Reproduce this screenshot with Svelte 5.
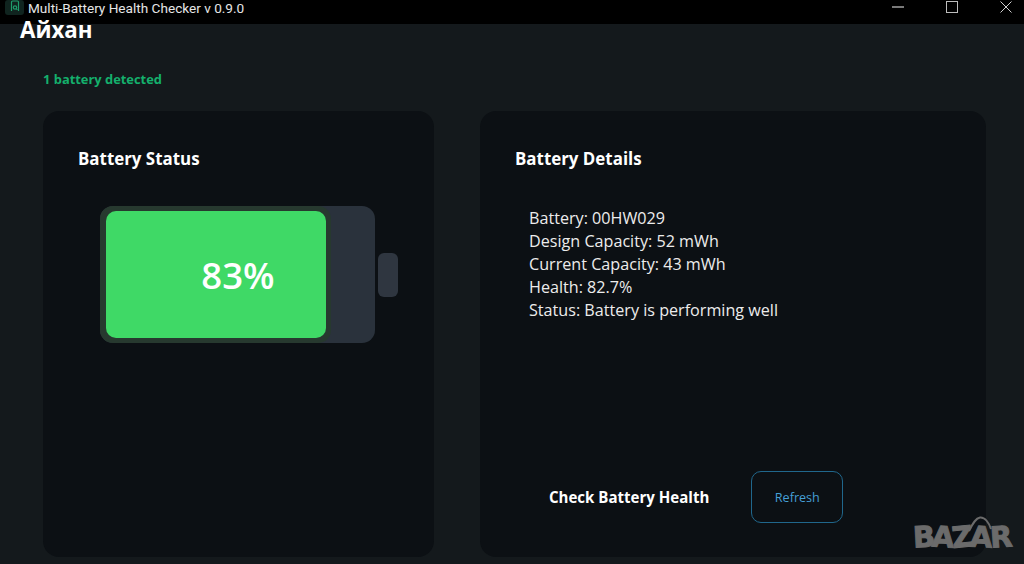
<script lang="ts">
  const battery = { name: '00HW029', design: 52, current: 43, health: 82.7, percent: 83 };
  const details = [
    `Battery: ${battery.name}`,
    `Design Capacity: ${battery.design} mWh`,
    `Current Capacity: ${battery.current} mWh`,
    `Health: ${battery.health}%`,
    'Status: Battery is performing well',
  ];
  const mark = [
    { c: 'B', r: -3 },
    { c: 'A', r: 4 },
    { c: 'Z', r: -6 },
    { c: 'A', r: 3 },
    { c: 'R', r: -4 },
  ];
</script>

<div class="window">
  <header class="titlebar">
    <div class="app-title">
      <span class="app-icon">
        <svg width="18" height="18" viewBox="0 0 18 18" fill="none" stroke="#1f9d6c" stroke-width="1.2">
          <path d="M7 1.5h4M5.5 13V4a1 1 0 0 1 1-1h5a1 1 0 0 1 1 1v9" />
          <circle cx="9" cy="9.5" r="1.7" />
          <path d="M10.2 10.7l1.2 1.2" />
        </svg>
      </span>
      <span class="app-name">Multi-Battery Health Checker v 0.9.0</span>
    </div>
    <div class="controls">
      <button class="ctl" aria-label="Minimize">
        <svg width="12" height="12" viewBox="0 0 12 12"><path d="M0 6h12" stroke="#f2f2f2" /></svg>
      </button>
      <button class="ctl" aria-label="Maximize">
        <svg width="12" height="12" viewBox="0 0 12 12"><rect x=".5" y=".5" width="11" height="11" fill="none" stroke="#bdbdbd" /></svg>
      </button>
      <button class="ctl" aria-label="Close">
        <svg width="12" height="12" viewBox="0 0 12 12"><path d="M.5.5l11 11M11.5.5l-11 11" stroke="#d0d0d0" /></svg>
      </button>
    </div>
  </header>

  <main>
    <h1>Айхан</h1>
    <p class="detected">1 battery detected</p>

    <div class="cards">
      <section class="card status">
        <h2>Battery Status</h2>
        <div class="battery">
          <div class="shell">
            <div class="glow">
              <div class="fill"><span>{battery.percent}%</span></div>
            </div>
          </div>
          <div class="cap"></div>
        </div>
      </section>

      <section class="card details">
        <h2>Battery Details</h2>
        <div class="lines">
          {#each details as line}
            <div>{line}</div>
          {/each}
        </div>
        <div class="actions">
          <span class="check">Check Battery Health</span>
          <button class="refresh">Refresh</button>
        </div>
      </section>
    </div>
  </main>

  <div class="watermark">
    <svg class="handle" width="26" height="16" viewBox="0 0 26 16" fill="none" stroke="#6b6b6b" stroke-width="2">
      <path d="M2 15C6 7 9 2 13 1.500C18 1 22 7 24 13" />
    </svg>
    {#each mark as m}
      <span style="transform: rotate({m.r}deg)">{m.c}</span>
    {/each}
  </div>
</div>

<style>
  :global(body) { margin: 0; background: #14191c; }

  .window {
    position: relative;
    width: 1024px;
    height: 564px;
    overflow: hidden;
    background: #14191c;
    color: #fff;
    font-family: "Open Sans", "Noto Sans", sans-serif;
  }

  .titlebar {
    height: 24px;
    background: #000;
    display: flex;
    justify-content: space-between;
  }

  .app-title {
    display: flex;
    align-items: flex-start;
    gap: 4px;
    padding-left: 5px;
    font-family: Roboto, "Open Sans", sans-serif;
    font-size: 13.6px;
    line-height: 16px;
    color: #e6e6e6;
  }

  .app-icon {
    width: 19px;
    height: 15px;
    background: #10241f;
    border-radius: 3px;
    overflow: hidden;
    display: flex;
    justify-content: center;
  }

  .app-icon svg { margin-top: -2px; }

  .controls {
    display: flex;
    gap: 24px;
    padding-right: 3.5px;
  }

  .ctl {
    width: 30px;
    height: 13px;
    padding: 0;
    border: none;
    background: none;
    display: flex;
    justify-content: center;
    align-items: center;
  }

  main { padding: 0 38px 0 43px; }

  h1 {
    margin: -8px 0 0 -23px;
    font-size: 22.3px;
    line-height: 28px;
    font-weight: 700;
  }

  .detected {
    margin: 27px 0 0;
    font-size: 12.9px;
    line-height: 17px;
    font-weight: 700;
    color: #14b06c;
  }

  .cards {
    display: grid;
    grid-template-columns: 391px 506px;
    gap: 46px;
    margin-top: 23px;
  }

  .card {
    height: 446px;
    box-sizing: border-box;
    background: #0c1014;
    border-radius: 16px;
    padding: 37px 35px 0;
  }

  h2 {
    margin: 0;
    font-size: 16.9px;
    line-height: 22px;
    font-weight: 700;
  }

  .battery {
    display: flex;
    align-items: center;
    margin: 36px 0 0 22px;
  }

  .shell {
    width: 275px;
    height: 137px;
    background: #2a323c;
    border-radius: 13px;
  }

  .glow {
    width: 231px;
    height: 137px;
    box-sizing: border-box;
    padding: 5px 5px 5px 6px;
    background: #27392f;
    border-radius: 13px;
  }

  .fill {
    height: 100%;
    background: #3fd966;
    border-radius: 10px;
    display: flex;
    justify-content: center;
    align-items: center;
  }

  .fill span {
    font-size: 36.5px;
    font-weight: 600;
    margin-left: 44px;
  }

  .cap {
    width: 20px;
    height: 44px;
    margin-left: 3px;
    background: #2f3640;
    border-radius: 6px;
  }

  .lines {
    margin: 37px 0 0 14px;
    font-size: 16.15px;
    line-height: 23px;
    color: #ececec;
  }

  .actions {
    display: flex;
    align-items: center;
    gap: 42px;
    margin: 149px 0 0 34px;
  }

  .check {
    font-size: 15.05px;
    font-weight: 700;
  }

  .refresh {
    width: 92px;
    height: 52px;
    background: none;
    border: 1px solid #20678c;
    border-radius: 10px;
    color: #459fd6;
    font-family: inherit;
    font-size: 12.6px;
  }

  .watermark {
    position: absolute;
    left: 913px;
    top: 519px;
    display: flex;
    font-family: "DejaVu Sans", sans-serif;
    font-size: 29px;
    line-height: 36px;
    font-weight: 700;
    letter-spacing: -2.8px;
    color: #6b6b6b;
    -webkit-text-stroke: 1px #6b6b6b;
  }

  .watermark span { display: block; }

  .handle {
    position: absolute;
    left: 54px;
    top: -3px;
  }
</style>
